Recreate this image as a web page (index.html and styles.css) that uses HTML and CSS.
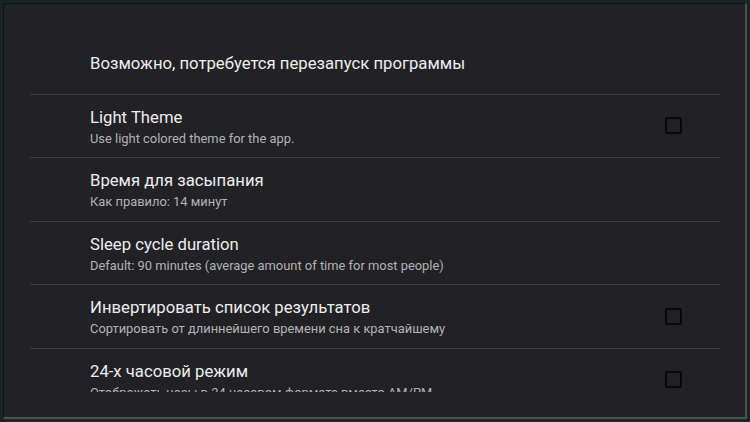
FILE: index.html
```html
<!DOCTYPE html>
<html lang="ru">
<head>
<meta charset="utf-8">
<link rel="stylesheet" href="styles.css">
</head>
<body>
<div class="panel">
  <div class="list">
    <div class="row header"><span class="title">Возможно, потребуется перезапуск программы</span></div>
    <div class="row">
      <div class="text"><div class="title">Light Theme</div><div class="summary">Use light colored theme for the app.</div></div>
      <span class="check"></span>
    </div>
    <div class="row">
      <div class="text"><div class="title">Время для засыпания</div><div class="summary">Как правило: 14 минут</div></div>
    </div>
    <div class="row">
      <div class="text"><div class="title">Sleep cycle duration</div><div class="summary">Default: 90 minutes (average amount of time for most people)</div></div>
    </div>
    <div class="row">
      <div class="text"><div class="title">Инвертировать список результатов</div><div class="summary">Сортировать от длиннейшего времени сна к кратчайшему</div></div>
      <span class="check"></span>
    </div>
    <div class="row">
      <div class="text"><div class="title">24-х часовой режим</div><div class="summary">Отображать часы в 24-часовом формате вместо AM/PM</div></div>
      <span class="check"></span>
    </div>
  </div>
</div>
</body>
</html>
```
FILE: styles.css
```css
html, body {
  margin: 0;
  padding: 0;
  height: 100%;
}
body {
  background: #1b2425;
  font-family: Roboto, "Noto Sans", sans-serif;
  overflow: hidden;
}
.panel {
  margin: 3px;
  height: calc(100% - 6px);
  box-sizing: border-box;
  background: #222226;
  border-top: 1px solid #0f1314;
  border-left: 1px solid #0f1314;
  border-right: 2px solid #4a5254;
  border-bottom: 2px solid #4a5254;
  padding: 27px 25px 25px 26px;
  display: flex;
  flex-direction: column;
}
.list {
  flex: 1;
  overflow: hidden;
}
.row {
  height: 62.5px;
  display: flex;
  align-items: center;
  padding-left: 60px;
  padding-right: 38px;
  border-top: 1px solid #3c3c41;
}
.row.header {
  border-top: none;
  padding-top: 4px;
  box-sizing: border-box;
}
.text {
  flex: 1;
  display: flex;
  flex-direction: column;
  gap: 2px;
  padding-top: 3px;
}
.title {
  color: #ededed;
  font-size: 16.7px;
  line-height: 20px;
}
.summary {
  color: #b3b3b3;
  font-size: 12.9px;
  line-height: 17px;
}
.check {
  width: 13px;
  height: 13px;
  border: 2px solid #0a0a0a;
  border-radius: 2px;
  flex: none;
}
```
